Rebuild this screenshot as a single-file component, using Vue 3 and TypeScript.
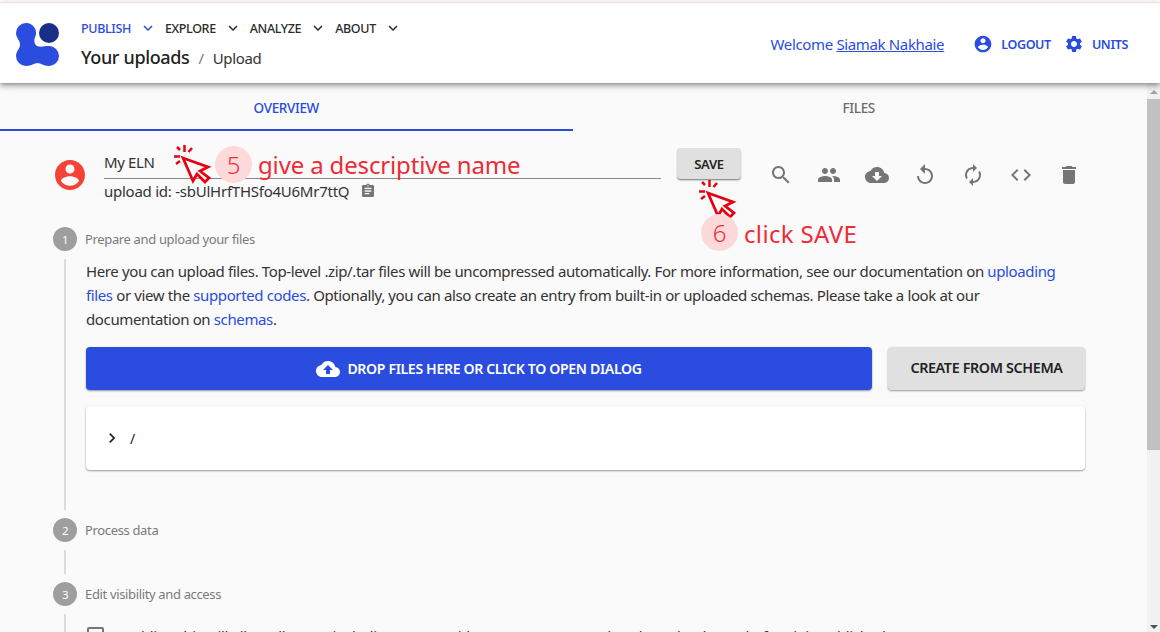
<script setup lang="ts">
const nav = [
  { label: 'PUBLISH', active: true },
  { label: 'EXPLORE', active: false },
  { label: 'ANALYZE', active: false },
  { label: 'ABOUT', active: false },
]
const icons = {
  account: 'M12 2C6.48 2 2 6.48 2 12s4.48 10 10 10 10-4.48 10-10S17.52 2 12 2zm0 3c1.66 0 3 1.34 3 3s-1.34 3-3 3-3-1.34-3-3 1.34-3 3-3zm0 14.2c-2.5 0-4.71-1.28-6-3.22.03-1.99 4-3.08 6-3.08 1.99 0 5.97 1.09 6 3.08-1.29 1.94-3.5 3.22-6 3.22z',
  settings: 'M19.14 12.94c.04-.3.06-.61.06-.94 0-.32-.02-.64-.07-.94l2.03-1.58c.18-.14.23-.41.12-.61l-1.92-3.32c-.12-.22-.37-.29-.59-.22l-2.39.96c-.5-.38-1.03-.7-1.62-.94l-.36-2.54c-.04-.24-.24-.41-.48-.41h-3.84c-.24 0-.43.17-.47.41l-.36 2.54c-.59.24-1.13.57-1.62.94l-2.39-.96c-.22-.08-.47 0-.59.22L2.74 8.87c-.12.21-.08.47.12.61l2.03 1.58c-.05.3-.09.63-.09.94s.02.64.07.94l-2.03 1.58c-.18.14-.23.41-.12.61l1.92 3.32c.12.22.37.29.59.22l2.39-.96c.5.38 1.03.7 1.62.94l.36 2.54c.05.24.24.41.48.41h3.84c.24 0 .44-.17.47-.41l.36-2.54c.59-.24 1.13-.56 1.62-.94l2.39.96c.22.08.47 0 .59-.22l1.92-3.32c.12-.22.07-.47-.12-.61l-2.01-1.58zM12 15.6c-1.98 0-3.6-1.62-3.6-3.6s1.62-3.6 3.6-3.6 3.6 1.62 3.6 3.6-1.62 3.6-3.6 3.6z',
  expand: 'M16.59 8.59L12 13.17 7.41 8.59 6 10l6 6 6-6z',
  chevron: 'M10 6L8.59 7.41 13.17 12l-4.58 4.59L10 18l6-6z',
  clipboard: 'M19 3h-4.18C14.4 1.84 13.3 1 12 1c-1.3 0-2.4.84-2.82 2H5c-1.1 0-2 .9-2 2v14c0 1.1.9 2 2 2h14c1.1 0 2-.9 2-2V5c0-1.1-.9-2-2-2zm-7 0c.55 0 1 .45 1 1s-.45 1-1 1-1-.45-1-1 .45-1 1-1zm2 14H7v-2h7v2zm3-4H7v-2h10v2zm0-4H7V7h10v2z',
  upload: 'M19.35 10.04C18.67 6.59 15.64 4 12 4 9.11 4 6.6 5.64 5.35 8.04 2.34 8.36 0 10.91 0 14c0 3.31 2.69 6 6 6h13c2.76 0 5-2.24 5-5 0-2.64-2.05-4.78-4.65-4.96zM14 13v4h-4v-4H7l5-5 5 5h-3z',
}
const actions = [
  'M15.5 14h-.79l-.28-.27C15.41 12.59 16 11.11 16 9.5 16 5.91 13.09 3 9.5 3S3 5.91 3 9.5 5.91 16 9.5 16c1.61 0 3.09-.59 4.23-1.57l.27.28v.79l5 4.99L20.49 19l-4.99-5zm-6 0C7.01 14 5 11.99 5 9.5S7.01 5 9.5 5 14 7.01 14 9.5 11.99 14 9.5 14z',
  'M16 11c1.66 0 2.99-1.34 2.99-3S17.66 5 16 5c-1.66 0-3 1.34-3 3s1.34 3 3 3zm-8 0c1.66 0 2.99-1.34 2.99-3S9.66 5 8 5C6.34 5 5 6.34 5 8s1.34 3 3 3zm0 2c-2.33 0-7 1.17-7 3.5V19h14v-2.5c0-2.33-4.67-3.5-7-3.5zm8 0c-.29 0-.62.02-.97.05 1.16.84 1.97 1.97 1.97 3.45V19h6v-2.5c0-2.33-4.67-3.5-7-3.5z',
  'M19.35 10.04C18.67 6.59 15.64 4 12 4 9.11 4 6.6 5.64 5.35 8.04 2.34 8.36 0 10.91 0 14c0 3.31 2.69 6 6 6h13c2.76 0 5-2.24 5-5 0-2.64-2.05-4.78-4.65-4.96zM17 13l-5 5-5-5h3V9h4v4h3z',
  'M12 5V1L7 6l5 5V7c3.31 0 6 2.69 6 6s-2.69 6-6 6-6-2.69-6-6H4c0 4.42 3.58 8 8 8s8-3.58 8-8-3.58-8-8-8z',
  'M12 6v3l4-4-4-4v3c-4.42 0-8 3.58-8 8 0 1.57.46 3.03 1.24 4.26L6.7 14.8c-.45-.83-.7-1.79-.7-2.8 0-3.31 2.69-6 6-6zm6.76 1.74L17.3 9.2c.44.84.7 1.79.7 2.8 0 3.31-2.69 6-6 6v-3l-4 4 4 4v-3c4.42 0 8-3.58 8-8 0-1.57-.46-3.03-1.24-4.26z',
  'M9.4 16.6L4.8 12l4.6-4.6L8 6l-6 6 6 6 1.4-1.4zm5.2 0l4.6-4.6-4.6-4.6L16 6l6 6-6 6-1.4-1.4z',
  'M6 19c0 1.1.9 2 2 2h8c1.1 0 2-.9 2-2V7H6v12zM19 4h-3.5l-1-1h-5l-1 1H5v2h14V4z',
]
const pointerArrow = 'M18 18 L43 27 L35 31 L44 38 L40 42 L32 34 L28 41 Z'
const sparks = ['M19.5 5 V12', 'M27 8 L23.5 12', 'M12 7 L15 10', 'M9 16.5 H15', 'M11 24 L15 21']
</script>

<template>
  <div class="page">
    <header class="bar">
      <svg class="logo" viewBox="0 0 44 44" width="44" height="44">
        <path class="logo-blue" d="M10 0A10 10 0 0 1 19 14.5C17.500 18 18.500 23 23 23.500C26 24 28 23 33 23A10 10 0 0 1 33 43C27 43 25 40 21.500 40C18 40 16 43 10 43A10 10 0 0 1 0 33C0 28 4 26 4 21.500C4 17 0 15 0 10A10 10 0 0 1 10 0Z" />
        <circle class="logo-dark" cx="33" cy="10" r="10" />
      </svg>
      <div class="bar-main">
        <nav class="nav">
          <span v-for="n in nav" :key="n.label" class="nav-item" :class="{ active: n.active }">
            {{ n.label }}
            <svg viewBox="0 0 24 24" width="18" height="18" class="nav-caret"><path :d="icons.expand" /></svg>
          </span>
        </nav>
        <div class="crumbs">
          <strong>Your uploads</strong><span class="sep">/</span><span>Upload</span>
        </div>
      </div>
      <div class="bar-right">
        <span class="welcome">Welcome <u>Siamak Nakhaie</u></span>
        <span class="bar-btn logout">
          <svg viewBox="0 0 24 24" width="20" height="20"><path :d="icons.account" /></svg>LOGOUT
        </span>
        <span class="bar-btn units">
          <svg viewBox="0 0 24 24" width="20" height="20"><path :d="icons.settings" /></svg>UNITS
        </span>
      </div>
    </header>

    <div class="below">
      <main class="main">
        <div class="tabs">
          <div class="tab on">OVERVIEW</div>
          <div class="tab">FILES</div>
        </div>

        <section class="title-row">
          <svg class="avatar" viewBox="2 2 20 20" width="30" height="30"><path :d="icons.account" /></svg>
          <div class="title-fields">
            <div class="name-row">
              <div class="name-field">My ELN</div>
              <button class="save">SAVE</button>
            </div>
            <div class="upload-id">
              upload id: -sbUlHrfTHSfo4U6Mr7ttQ
              <svg viewBox="0 0 24 24" width="16" height="16"><path :d="icons.clipboard" /></svg>
            </div>
          </div>
          <div class="actions">
            <svg v-for="a in actions" :key="a" viewBox="0 0 24 24" width="24" height="24"><path :d="a" /></svg>
          </div>
        </section>

        <section class="step">
          <div class="step-head"><span class="dot">1</span><span class="step-label">Prepare and upload your files</span></div>
          <div class="step-body first">
            <div class="intro">
              <div>Here you can upload files. Top-level .zip/.tar files will be uncompressed automatically. For more information, see our documentation on <a>uploading</a></div>
              <div><a>files</a> or view the <a>supported codes</a>. Optionally, you can also create an entry from built-in or uploaded schemas. Please take a look at our</div>
              <div>documentation on <a>schemas</a>.</div>
            </div>
            <div class="drop-row">
              <button class="drop">
                <svg viewBox="0 0 24 24" width="24" height="24"><path :d="icons.upload" /></svg>DROP FILES HERE OR CLICK TO OPEN DIALOG
              </button>
              <button class="schema">CREATE FROM SCHEMA</button>
            </div>
            <div class="tree">
              <svg viewBox="0 0 24 24" width="20" height="20"><path :d="icons.chevron" /></svg><span>/</span>
            </div>
          </div>
        </section>

        <section class="step">
          <div class="step-head"><span class="dot">2</span><span class="step-label">Process data</span></div>
          <div class="step-body short"></div>
        </section>

        <section class="step">
          <div class="step-head"><span class="dot">3</span><span class="step-label">Edit visibility and access</span></div>
          <div class="step-body last">
            <div class="check-row"><span class="check"></span><span>Enabling this will allow all users, including guests without an account, to view the upload even before it is published.</span></div>
          </div>
        </section>

        <!-- tutorial annotations painted over the page -->
        <svg class="pointer pointer5" viewBox="0 0 55 45" width="55" height="45">
          <path class="spark" v-for="s in sparks" :key="s" :d="s" />
          <path class="arrow" :d="pointerArrow" />
        </svg>
        <div class="note note5">
          <span class="bubble">5</span><span class="note-text">give a descriptive name</span>
        </div>
        <svg class="pointer pointer6" viewBox="0 0 55 45" width="55" height="45">
          <path class="spark" v-for="s in sparks" :key="s" :d="s" />
          <path class="arrow" :d="pointerArrow" />
        </svg>
        <div class="note note6">
          <span class="bubble">6</span><span class="note-text">click SAVE</span>
        </div>
      </main>

      <div class="scrollbar">
        <span class="arrow-up"></span>
        <div class="thumb"></div>
        <span class="arrow-down"></span>
      </div>
    </div>
  </div>
</template>

<style>
html, body { margin: 0; height: 100%; overflow: hidden; background: #fafafa; }
</style>

<style scoped>
.page {
  width: 1160px; height: 632px; display: flex; flex-direction: column; overflow: hidden;
  font-family: "Noto Sans", "Open Sans", sans-serif; color: #222; background: #fff;
  letter-spacing: -0.35px;
}
svg { display: block; fill: currentColor; flex: none; }
button { font: inherit; letter-spacing: inherit; border: 0; }

.bar {
  position: relative; z-index: 2; box-sizing: border-box; flex: none; background: #fff;
  border-top: 1px solid #fbdde0; margin-top: 2px; height: 81px;
  box-shadow: 0 2px 4px -1px rgba(0,0,0,.3), 0 4px 5px 0 rgba(0,0,0,.16), 0 1px 10px 0 rgba(0,0,0,.12);
  display: flex; align-items: flex-start; padding: 17px 32px 0 16px;
}
.logo { margin-top: 3px; }
.logo-blue { fill: #2a4cdf; }
.logo-dark { fill: #192e86; }
.bar-main { margin-left: 21px; }
.nav { display: flex; height: 16px; align-items: center; }
.nav-item { display: flex; align-items: center; font-size: 12.500px; font-weight: 500; margin-right: 8px; color: #2b2b2b; }
.nav-item.active { color: #2a4cdf; }
.nav-caret { margin-left: 8px; }
.crumbs { margin-top: 9px; font-size: 15px; display: flex; align-items: baseline; color: #333; }
.crumbs strong { font-size: 18px; font-weight: 500; color: #222; }
.sep { margin: 0 9px; color: #777; }
.bar-right { margin-left: auto; display: flex; align-items: center; height: 48px; color: #2a4cdf; }
.welcome { font-size: 15px; margin-right: 29px; }
.bar-btn { display: flex; align-items: center; font-size: 12.500px; font-weight: 600; }
.bar-btn svg { margin-right: 8px; }
.logout { margin-right: 13px; }

.below { flex: 1; min-height: 0; display: flex; background: #fafafa; }
.main { position: relative; flex: 1; min-width: 0; overflow: hidden; }
.scrollbar { width: 13px; flex: none; background: #f1f1f1; display: flex; flex-direction: column; align-items: center; position: relative; }
.arrow-up { margin-top: 7px; border: 4px solid transparent; border-top: 0; border-bottom: 4px solid #a3a3a3; }
.thumb { width: 13px; height: 351px; background: #c1c1c1; margin-top: 5px; }
.arrow-down { margin-top: auto; margin-bottom: 3px; border: 4px solid transparent; border-bottom: 0; border-top: 4px solid #505050; }

.tabs { display: flex; height: 48px; width: 1145px; }
.tab { flex: 1; box-sizing: border-box; display: flex; align-items: center; justify-content: center; font-size: 13.500px; font-weight: 500; color: #6b6b6b; padding-top: 4px; border-bottom: 2px solid transparent; }
.tab.on { color: #2a4cdf; border-bottom-color: #2a4cdf; }

.title-row { display: flex; align-items: flex-start; padding: 15px 0 0 55px; height: 96px; box-sizing: border-box; }
.avatar { color: #f44336; margin-top: 14px; }
.title-fields { margin-left: 19px; width: 637px; }
.name-row { display: flex; align-items: flex-start; height: 34px; }
.name-field { width: 557px; height: 33px; box-sizing: border-box; padding-top: 6px; border-bottom: 1px solid #8a8a8a; font-size: 15px; color: #333; line-height: 20px; }
.save { margin: 2px 0 0 16px; width: 64px; height: 31px; border-radius: 4px; background: #e0e0e0; font-size: 13px; font-weight: 600; color: #222; box-shadow: 0 1px 1px rgba(0,0,0,.35), 0 2px 2px rgba(0,0,0,.14); }
.upload-id { display: flex; align-items: center; gap: 11px; font-size: 15px; letter-spacing: -0.25px; color: #333; line-height: 20px; margin-top: 1px; white-space: nowrap; }
.upload-id svg { color: #757575; }
.actions { margin-left: 28px; display: flex; gap: 24px; color: #757575; margin-top: 17px; }

.step-head { display: flex; align-items: center; height: 24px; padding-left: 53px; }
.dot { width: 24px; height: 24px; border-radius: 50%; background: #9e9e9e; color: #fff; font-size: 11.500px; display: flex; align-items: center; justify-content: center; }
.step-label { margin-left: 8px; font-size: 13px; color: #7a7a7a; }
.step-body { margin: 8px 0 8px 64px; border-left: 2px solid #dcdcdc; padding: 0 62px 0 20px; box-sizing: border-box; }
.step-body.first { height: 251px; }
.step-body.short { height: 24px; }
.step-body.last { padding-top: 2px; height: 60px; }
.intro { font-size: 15px; letter-spacing: -0.375px; line-height: 24px; color: #333; height: 72px; white-space: nowrap; }
.intro a { color: #2a4cdf; }
.drop-row { display: flex; gap: 16px; height: 43px; margin-top: 16px; }
.drop { flex: 1; background: #2a4cdf; color: #fff; border-radius: 4px; font-size: 14.100px; font-weight: 600; display: flex; align-items: center; justify-content: center; gap: 7px; box-shadow: 0 1px 2px rgba(0,0,0,.4); }
.schema { width: 197px; background: #e0e0e0; color: #222; border-radius: 4px; font-size: 14.300px; font-weight: 600; box-shadow: 0 1px 2px rgba(0,0,0,.4); white-space: nowrap; padding: 0 0 2px; }
.tree { margin-top: 16px; height: 64px; background: #fff; border-radius: 4px; box-shadow: 0 1px 2px rgba(0,0,0,.4); display: flex; align-items: center; padding-left: 16px; gap: 8px; font-size: 14px; }
.check-row { display: flex; gap: 12px; align-items: flex-start; font-size: 15px; line-height: 24px; color: #333; white-space: nowrap; margin-top: 8px; }
.check { width: 13px; height: 13px; border: 2px solid #757575; border-radius: 2px; margin: 3px 0 0 1px; flex: none; }

.note { position: absolute; display: flex; align-items: center; color: #ee2b36; }
.note5 { left: 215px; top: 63px; }
.note6 { left: 701px; top: 131px; }
.pointer { position: absolute; }
.pointer5 { left: 165px; top: 57px; }
.pointer6 { left: 690px; top: 92px; }
.bubble { width: 37px; height: 37px; border-radius: 50%; background: #fdd9da; display: flex; align-items: center; justify-content: center; font-size: 24px; margin-right: 6px; font-weight: 300; }
.note-text { font-size: 24px; letter-spacing: -0.15px; white-space: nowrap; }
.note6 .note-text { letter-spacing: .35px; padding-top: 2px; }
.arrow { fill: #fff; stroke: #e60012; stroke-width: 2.800; stroke-linejoin: miter; }
.spark { fill: none; stroke: #e60012; stroke-width: 2.500; }
</style>
